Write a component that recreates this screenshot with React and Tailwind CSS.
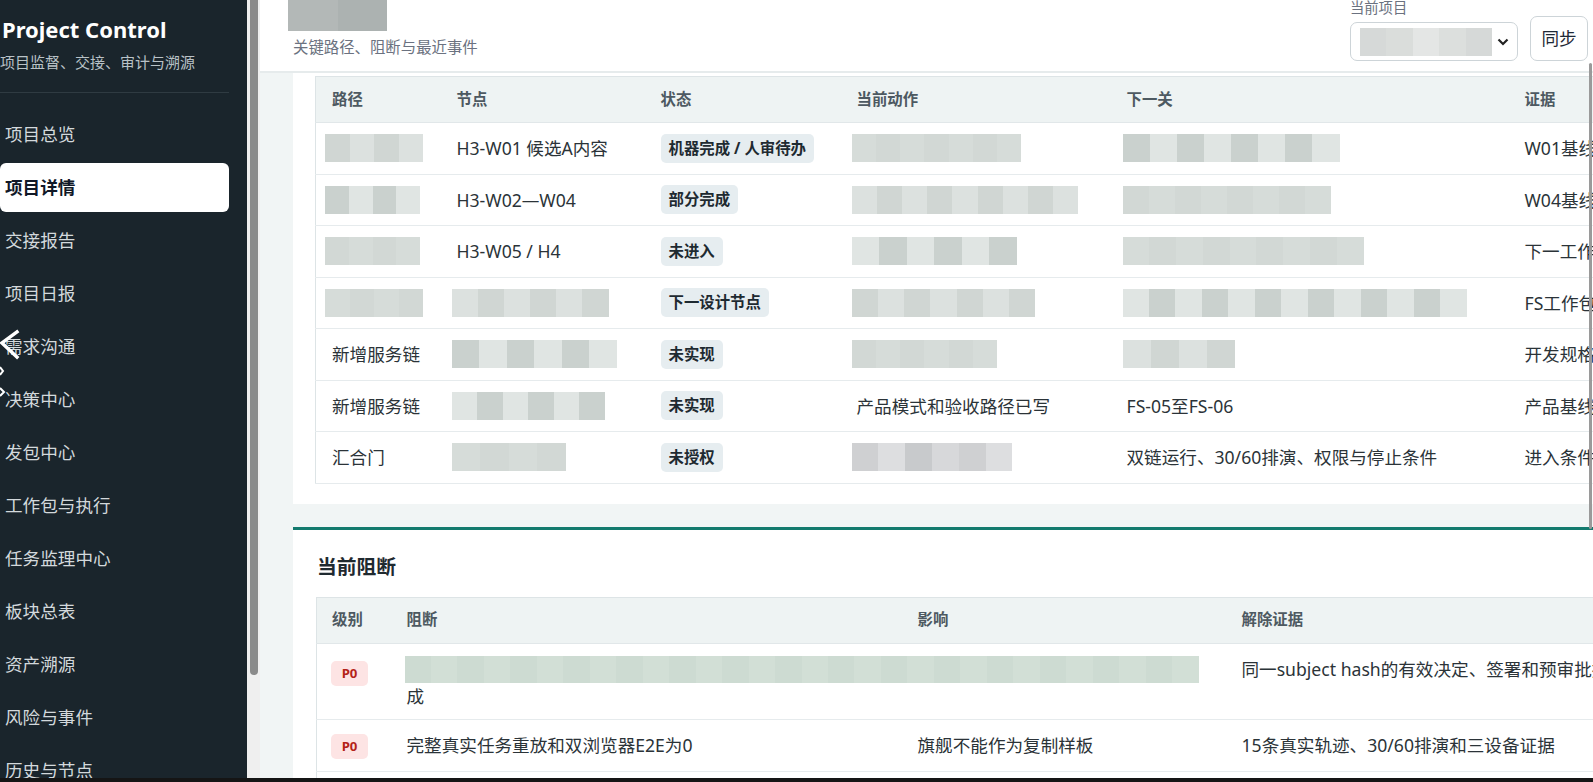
import React from 'react';

const PAL = {
  gray: ['bg-[#d0d6d3]', 'bg-[#d6dcd9]', 'bg-[#cad1ce]', 'bg-[#dce1df]', 'bg-[#d2d8d5]', 'bg-[#e0e5e3]'],
  green: ['bg-[#cddbd2]', 'bg-[#e0ebe4]', 'bg-[#e7f0ea]', 'bg-[#d2dfd6]', 'bg-[#c9d6cd]', 'bg-[#dbe6df]'],
  head: ['bg-[#b3b8b7]', 'bg-[#acb2b1]'],
  select: ['bg-[#d6d9d8]', 'bg-[#dcdfdd]', 'bg-[#e4e6e5]', 'bg-[#dadddb]'],
  neutral: ['bg-[#cfd0d2]', 'bg-[#d7d8da]', 'bg-[#c8cacc]', 'bg-[#dddee0]'],
};

function Blur({ w, h = 28, tone = 'gray', n, off = 0, className = '' }) {
  const pal = PAL[tone];
  const count = n || Math.max(2, Math.round(w / 26));
  return (
    <div className={`flex shrink-0 ${className}`} style={{ width: w, height: h }}>
      {Array.from({ length: count }).map((_, i) => (
        <div key={i} className={`flex-1 ${pal[(i * 3 + off) % pal.length]}`} />
      ))}
    </div>
  );
}

function Badge({ children }) {
  return (
    <span className="inline-flex h-[29px] items-center whitespace-nowrap rounded-[5px] bg-[#e6edf0] px-[8px] text-[15.4px] font-bold text-[#1e2a31]">
      {children}
    </span>
  );
}

function P0() {
  return (
    <span className="inline-flex h-[25px] w-[37px] items-center justify-center rounded-[5px] bg-[#fde4e4] text-[13.2px] font-bold text-[#b42318]">
      P0
    </span>
  );
}

const NAV = [
  '项目总览', '项目详情', '交接报告', '项目日报', '需求沟通', '决策中心', '发包中心',
  '工作包与执行', '任务监理中心', '板块总表', '资产溯源', '风险与事件', '历史与节点',
];

function Sidebar() {
  return (
    <div className="relative flex h-full shrink-0">
      <aside className="h-full w-[247px] overflow-hidden bg-[#1a252c] pr-[18px] pt-[14px]">
        <h1 className="whitespace-nowrap pl-[2px] text-[22px] font-bold leading-[30px] text-white">Project Control</h1>
        <p className="mt-[8px] whitespace-nowrap text-[15px] leading-[20px] text-[#b9c2c7]">项目监督、交接、审计与溯源</p>
        <div className="mt-[20px] h-px bg-[#2f3b42]" />
        <nav className="mt-[17px] flex flex-col gap-[4px]">
          {NAV.map((item) => (
            <div
              key={item}
              className={
                item === '项目详情'
                  ? 'flex h-[49px] items-center rounded-[6px] bg-white pl-[5px] text-[17.6px] font-bold text-[#111827]'
                  : 'flex h-[49px] items-center pl-[5px] text-[17.6px] text-[#d3d9dc]'
              }
            >
              {item}
            </div>
          ))}
        </nav>
      </aside>
      <div className="h-full w-[13px] bg-[#efefef] pl-[3px] pr-[2px]">
        <div className="h-[675px] w-[8px] rounded-b-[4px] bg-[#8a8a8a]" />
      </div>
      <svg className="absolute left-0 top-[325px]" width="22" height="76" viewBox="0 0 22 76" fill="none">
        <polyline points="17,7 2,18 17,32" stroke="white" strokeWidth="3.4" strokeLinecap="square" />
        <polyline points="0,42 3,46 0,50" stroke="white" strokeWidth="2" />
        <polyline points="0,63 4,67 0,71" stroke="white" strokeWidth="2" />
      </svg>
    </div>
  );
}

function Header() {
  return (
    <header className="flex h-[73px] shrink-0 items-start justify-between border-b-[2px] border-[#e6ebec] bg-white pl-[33px] pr-[5px]">
      <div>
        <Blur w={99} h={31} tone="head" n={2} className="-ml-[5px]" />
        <p className="mt-[7px] text-[15.4px] leading-[20px] text-[#6b7280]">关键路径、阻断与最近事件</p>
      </div>
      <div className="flex items-end gap-[12px] self-end pb-[10px]">
        <div className="flex flex-col">
          <span className="text-[14.3px] leading-[18px] text-[#6b7280]">当前项目</span>
          <div className="mt-[5px] flex h-[39px] w-[168px] items-center justify-between rounded-[7px] border border-[#cdd4d8] bg-white pl-[9px] pr-[8px]">
            <Blur w={132} h={28} tone="select" n={5} />
            <svg width="12" height="8" viewBox="0 0 12 8" fill="none">
              <polyline points="1.5,1.5 6,6 10.5,1.5" stroke="#222" strokeWidth="2.2" />
            </svg>
          </div>
        </div>
        <button className="flex h-[45px] w-[58px] items-center justify-center rounded-[7px] border border-[#cdd4d8] bg-white text-[17.6px] text-[#1f2937]">
          同步
        </button>
      </div>
    </header>
  );
}

const ROWS1 = [
  {
    path: { blur: 98 }, node: 'H3-W01 候选A内容', status: '机器完成 / 人审待办',
    action: { blur: 170, off: 1 }, next: { blur: 217, off: 2 }, ev: 'W01基线快照与机器审查记录',
  },
  {
    path: { blur: 95, off: 2 }, node: 'H3-W02—W04', status: '部分完成',
    action: { blur: 227, off: 3 }, next: { blur: 208, off: 4 }, ev: 'W04基线与差异记录',
  },
  {
    path: { blur: 95, off: 4 }, node: 'H3-W05 / H4', status: '未进入',
    action: { blur: 165, off: 5 }, next: { blur: 241, off: 1 }, ev: '下一工作包进入条件',
  },
  {
    path: { blur: 98, off: 1 }, node: { blur: 157, off: 3 }, status: '下一设计节点',
    action: { blur: 184, off: 0 }, next: { blur: 344, off: 5 }, ev: 'FS工作包与验收说明',
  },
  {
    path: '新增服务链', node: { blur: 165, off: 2 }, status: '未实现',
    action: { blur: 146, off: 4 }, next: { blur: 112, off: 3 }, ev: '开发规格与接口清单',
  },
  {
    path: '新增服务链', node: { blur: 153, off: 5 }, status: '未实现',
    action: '产品模式和验收路径已写', next: 'FS-05至FS-06', ev: '产品基线与验收路径',
  },
  {
    path: '汇合门', node: { blur: 114, off: 1 }, status: '未授权',
    action: { blur: 161, off: 0, tone: 'neutral' }, next: '双链运行、30/60排演、权限与停止条件', ev: '进入条件与授权记录',
  },
];

function Cell({ v, ml = '-ml-[5px]' }) {
  if (typeof v === 'string') return <span className="whitespace-nowrap">{v}</span>;
  return <Blur w={v.blur} h={28} tone={v.tone || 'gray'} off={v.off || 0} className={ml} />;
}

function CriticalTable() {
  const th = 'px-[16px] text-left align-middle text-[15.4px] font-semibold text-[#4d5961]';
  const td = 'px-[16px] align-middle';
  return (
    <table className="w-[1500px] table-fixed border-collapse border border-[#dde4e6] text-[17.6px] text-[#2b3338]">
      <colgroup>
        <col className="w-[125px]" />
        <col className="w-[204px]" />
        <col className="w-[196px]" />
        <col className="w-[270px]" />
        <col className="w-[398px]" />
        <col className="w-[307px]" />
      </colgroup>
      <thead>
        <tr className="h-[46px] border-b border-[#e1e7e9] bg-[#eef3f3]">
          <th className={th}>路径</th>
          <th className={th}>节点</th>
          <th className={th}>状态</th>
          <th className={th}>当前动作</th>
          <th className={th}>下一关</th>
          <th className={th}>证据</th>
        </tr>
      </thead>
      <tbody>
        {ROWS1.map((r, i) => (
          <tr key={i} className="h-[51.5px] border-b border-[#e6ebed]">
            <td className={td}><Cell v={r.path} ml="-ml-[7px]" /></td>
            <td className={td}><Cell v={r.node} /></td>
            <td className={td}><Badge>{r.status}</Badge></td>
            <td className={td}><Cell v={r.action} /></td>
            <td className={td}><Cell v={r.next} ml="-ml-[4px]" /></td>
            <td className={td}><span className="whitespace-nowrap">{r.ev}</span></td>
          </tr>
        ))}
      </tbody>
    </table>
  );
}

function BlockTable() {
  const th = 'px-[15px] text-left align-middle text-[15.4px] font-semibold text-[#4d5961]';
  return (
    <table className="w-[1510px] table-fixed border-collapse border border-[#dde4e6] text-[17.6px] text-[#2b3338]">
      <colgroup>
        <col className="w-[75px]" />
        <col className="w-[511px]" />
        <col className="w-[324px]" />
        <col className="w-[600px]" />
      </colgroup>
      <thead>
        <tr className="h-[46px] border-b border-[#e1e7e9] bg-[#eef3f3]">
          <th className={th}>级别</th>
          <th className={th}>阻断</th>
          <th className={th}>影响</th>
          <th className={th}>解除证据</th>
        </tr>
      </thead>
      <tbody>
        <tr className="border-b border-[#e6ebed]">
          <td className="px-[14px] pt-[14px] align-top"><P0 /></td>
          <td className="px-[15px] pb-[10px] pt-[12px] align-top">
            <Blur w={794} h={27} tone="green" n={30} className="-ml-[2px]" />
            <div className="leading-[26px]">成</div>
          </td>
          <td className="px-[15px] pt-[12px] align-top" />
          <td className="whitespace-nowrap px-[15px] pt-[12px] align-top leading-[27px]">
            同一subject hash的有效决定、签署和预审批报告
          </td>
        </tr>
        <tr className="h-[52px] border-b border-[#e6ebed]">
          <td className="px-[14px] align-middle"><P0 /></td>
          <td className="whitespace-nowrap px-[15px] align-middle">完整真实任务重放和双浏览器E2E为0</td>
          <td className="whitespace-nowrap px-[15px] align-middle">旗舰不能作为复制样板</td>
          <td className="whitespace-nowrap px-[15px] align-middle">15条真实轨迹、30/60排演和三设备证据</td>
        </tr>
        <tr className="h-[52px]">
          <td className="px-[14px] align-middle"><P0 /></td>
          <td className="whitespace-nowrap px-[15px] align-middle">权限与停止条件未授权</td>
          <td className="whitespace-nowrap px-[15px] align-middle">汇合门不能进入</td>
          <td className="whitespace-nowrap px-[15px] align-middle">授权记录与停止条件</td>
        </tr>
      </tbody>
    </table>
  );
}

export default function App() {
  return (
    <div className="relative flex h-[782px] w-[1593px] flex-col overflow-hidden bg-[#f1f5f5] font-['Noto_Sans','Noto_Sans_CJK_SC',sans-serif]">
      <div className="flex min-h-0 flex-1">
        <Sidebar />
        <main className="flex min-w-0 flex-1 flex-col overflow-hidden bg-[#f1f5f5]">
          <Header />
          <div className="pl-[33px]">
            <section className="w-[1340px] overflow-hidden bg-white pb-[20px] pl-[22px] pt-[3px]">
              <CriticalTable />
            </section>
            <section className="mt-[23px] w-[1340px] overflow-hidden border-t-[3px] border-[#137a6e] bg-white pl-[23px] pt-[23px]">
              <h2 className="pl-[1px] text-[19.8px] font-bold leading-[28px] text-[#1f2a30]">当前阻断</h2>
              <div className="mt-[16px]">
                <BlockTable />
              </div>
            </section>
          </div>
        </main>
      </div>
      <div className="absolute right-[1px] top-[63px] h-[466px] w-[3px] rounded-full bg-[#9a9a9a]" />
      <div className="h-[4px] shrink-0 bg-[#151515]" />
    </div>
  );
}
